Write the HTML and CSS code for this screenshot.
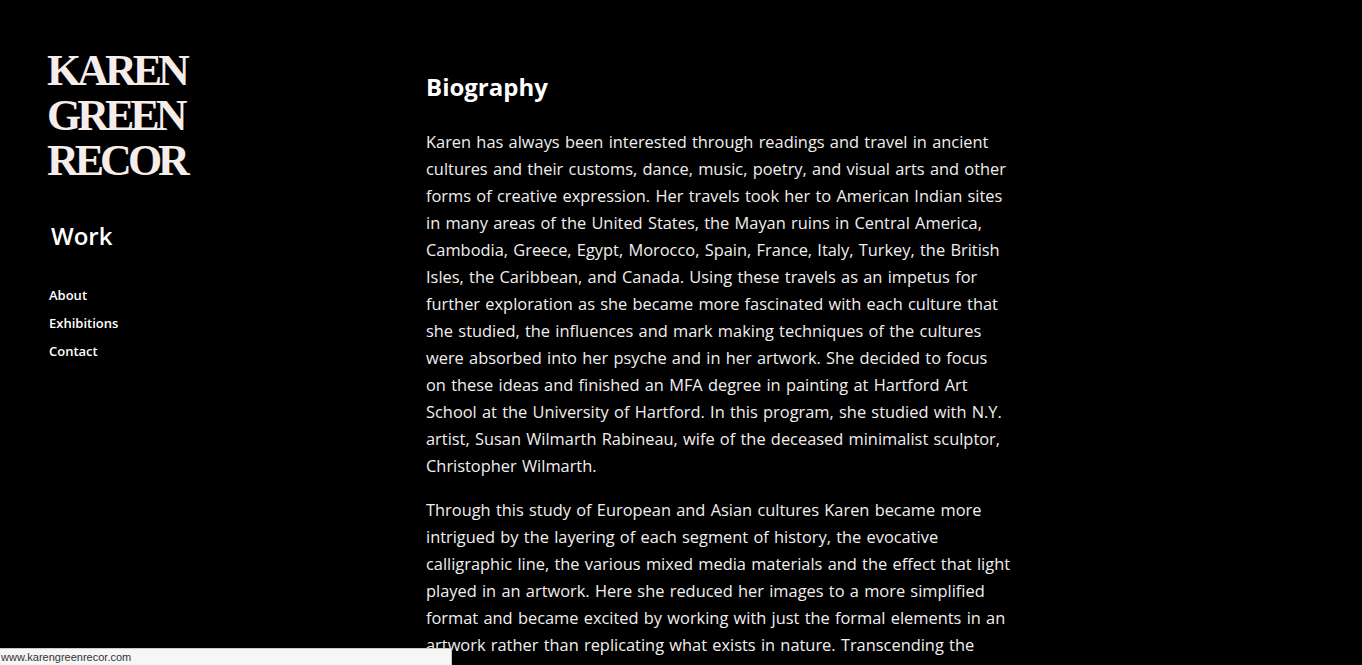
FILE: index.html
```html
<!DOCTYPE html>
<html lang="en">
<head>
<meta charset="utf-8">
<title>Biography — Karen Green Recor</title>
<link rel="stylesheet" href="styles.css">
</head>
<body>
<div class="page">
  <aside class="sidebar">
    <div class="logo">KAREN<br>GREEN<br>RECOR</div>
    <div class="work">Work</div>
    <nav class="nav">
      <a href="#">About</a>
      <a href="#">Exhibitions</a>
      <a href="#">Contact</a>
    </nav>
  </aside>
  <main class="content">
    <h1 class="title">Biography</h1>
    <p>Karen has always been interested through readings and travel in ancient cultures and their customs, dance, music, poetry, and visual arts and other forms of creative expression. Her travels took her to American Indian sites in many areas of the United States, the Mayan ruins in Central America, Cambodia, Greece, Egypt, Morocco, Spain, France, Italy, Turkey, the British Isles, the Caribbean, and Canada. Using these travels as an impetus for further exploration as she became more fascinated with each culture that she studied, the influences and mark making techniques of the cultures were absorbed into her psyche and in her artwork. She decided to focus on these ideas and finished an MFA degree in painting at Hartford Art School at the University of Hartford. In this program, she studied with N.Y. artist, Susan Wilmarth Rabineau, wife of the deceased minimalist sculptor, Christopher Wilmarth.</p>
    <p>Through this study of European and Asian cultures Karen became more intrigued by the layering of each segment of history, the evocative calligraphic line, the various mixed media materials and the effect that light played in an artwork. Here she reduced her images to a more simplified format and became excited by working with just the formal elements in an artwork rather than replicating what exists in nature. Transcending the boundaries of time and place, her work explores the universal language of mark and gesture.</p>
  </main>
</div>
<div class="status">www.karengreenrecor.com</div>
</body>
</html>
```
FILE: styles.css
```css
html, body {
  margin: 0;
  padding: 0;
  background: #000;
  height: 100%;
  overflow: hidden;
}
body {
  font-family: "Open Sans", "Lato", sans-serif;
  color: #f2eeee;
}
.page {
  display: flex;
  align-items: flex-start;
}
.sidebar {
  width: 379px;
  padding: 48px 0 0 47px;
  box-sizing: content-box;
  flex: none;
}
.logo {
  font-family: "Liberation Serif", "Times New Roman", serif;
  font-weight: 700;
  font-size: 44px;
  line-height: 45px;
  letter-spacing: -4px;
  color: #f6ecea;
}
.work {
  font-size: 24px;
  font-weight: 600;
  margin: 38px 0 0 4px;
  color: #fff;
  line-height: 30px;
}
.nav {
  display: flex;
  flex-direction: column;
  gap: 8px;
  margin: 34px 0 0 2px;
}
.nav a {
  color: #fff;
  text-decoration: none;
  font-size: 13px;
  font-weight: 600;
  line-height: 20px;
}
.content {
  width: 585px;
  padding-top: 70px;
}
.title {
  font-size: 24px;
  font-weight: 700;
  margin: 0 0 24px;
  line-height: 34px;
  color: #fff;
}
.content p {
  font-size: 16.4px;
  word-spacing: 1px;
  line-height: 27px;
  margin: 0 0 17px;
}
.status {
  position: fixed;
  left: 0;
  bottom: 0;
  width: 450px;
  height: 16px;
  background: #f6f6f6;
  border: 1px solid #c8c8c8;
  border-left: none;
  border-bottom: none;
  font-family: "Liberation Sans", Arial, sans-serif;
  font-size: 11px;
  line-height: 16px;
  color: #333;
  padding-left: 1px;
}
```
